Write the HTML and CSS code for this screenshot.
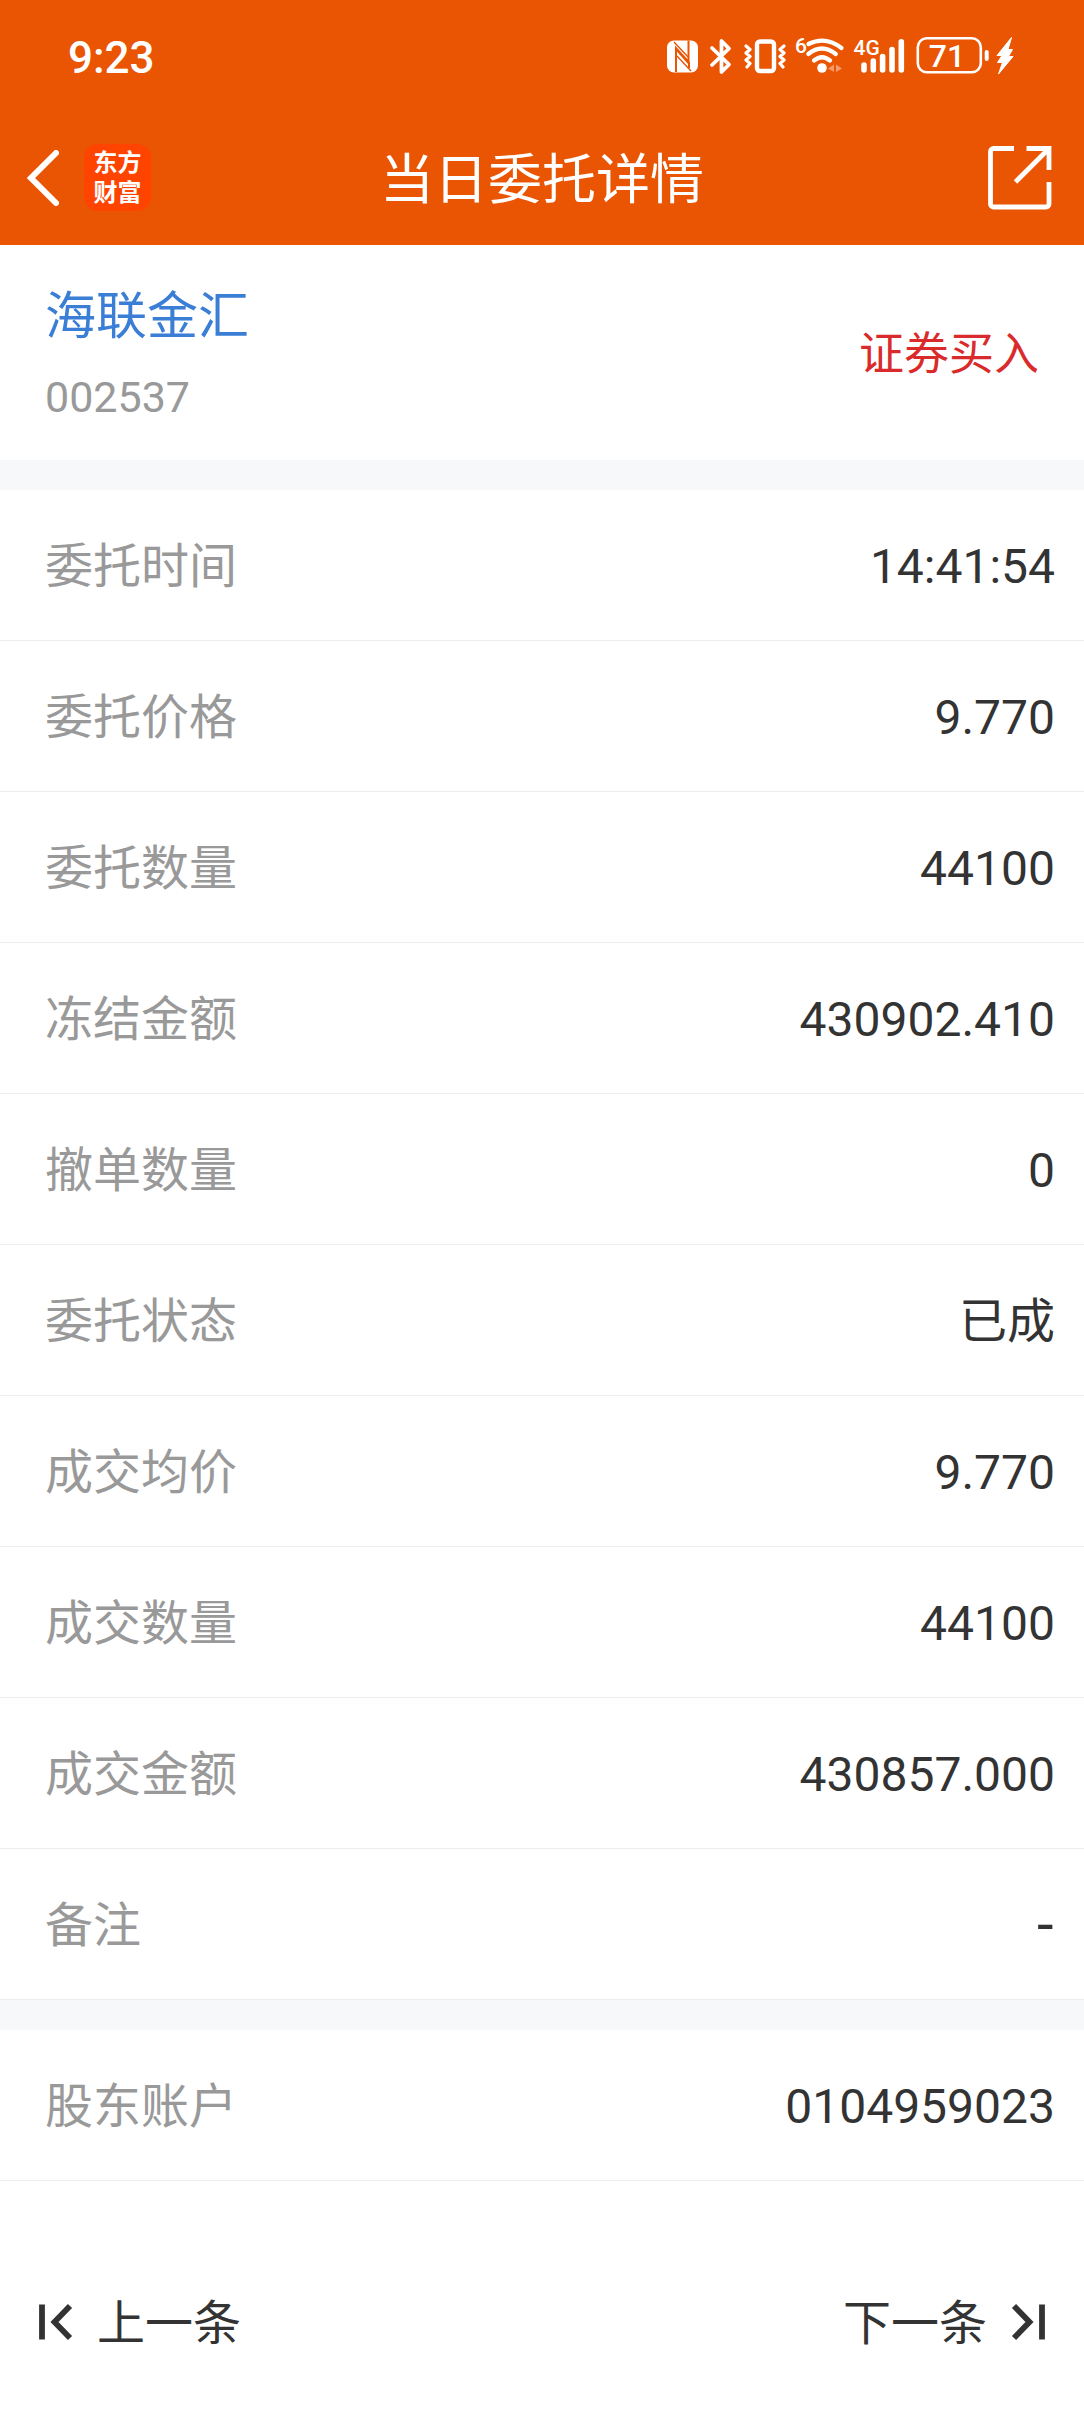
FILE: index.html
```html
<!DOCTYPE html>
<html lang="zh-CN">
<head>
    <meta charset="UTF-8">
    <meta name="viewport" content="width=device-width, initial-scale=1.0">
    <title>当日委托详情</title>
    <link rel="stylesheet" href="styles.css">
</head>
<body>
    <header class="header">
        <div class="status-bar">
            <span class="time">9:23</span>
            <svg class="status-icons" width="352" height="64" viewBox="664 24 352 64">
                <!-- NFC -->
                <rect x="667" y="40.5" width="31" height="32" rx="7" fill="#fff"/>
                <path d="M676 72V48L689 62.5V68M688.5 40.5V63L677 50" fill="none" stroke="#e95503" stroke-width="2"/>
                <path d="M674 42l14 15M677 56l14 15" fill="none" stroke="#e95503" stroke-width="1.4"/>
                <!-- bluetooth -->
                <path d="M712 48l17 16.5-7.500 7.500V41l7.500 7.500L712 65" fill="none" stroke="#fff" stroke-width="3.800" stroke-linejoin="round" stroke-linecap="round"/>
                <!-- vibrate -->
                <rect x="757" y="41.500" width="17" height="29.500" rx="3" fill="none" stroke="#fff" stroke-width="4.400"/>
                <path d="M746 46l4 3.500-4 3.500 4 3.500-4 3.500 4 3.500-3 3.500M784 46l-4 3.500 4 3.500-4 3.500 4 3.500-4 3.500 3 3.500" fill="none" stroke="#fff" stroke-width="3.200" stroke-linejoin="round" stroke-linecap="round"/>
                <!-- wifi -->
                <text x="795" y="53.300" class="tiny">6</text>
                <path d="M808.500 44q17-8.500 33 4M808.300 54q13.500-11 27.500 0M814 60.500q8-6.500 16 0" fill="none" stroke="#fff" stroke-width="4.200" stroke-linecap="round"/>
                <circle cx="822" cy="68" r="4.800" fill="#fff"/>
                <path d="M834 64.500v7.500l-6-3.500zM836 64.500v7.500l6-3.500z" fill="#f49a6b"/>
                <!-- signal -->
                <text x="853.500" y="55.300" class="tiny">4G</text>
                <path d="M864 65v5M873.300 61v9M882.600 56.500V70M892 49.500V70M901.300 41.800V70" stroke="#fff" stroke-width="5.600" stroke-linecap="round"/>
                <!-- battery -->
                <rect x="917.800" y="38.300" width="63" height="34" rx="9" fill="none" stroke="#fff" stroke-width="2.600"/>
                <text x="947" y="67.300" class="battery" text-anchor="middle">71</text>
                <rect x="984.700" y="50" width="4" height="11" rx="2" fill="#fff"/>
                <path d="M1011.500 37.500L997 55.500h5l-4.500 7h5l-4 11.500 14.500-17.500h-4.500l4-7h-4.500z" fill="#fff" stroke="#fff" stroke-width="1" stroke-linejoin="round"/>
            </svg>
        </div>
        <div class="nav-bar">
            <div class="nav-left">
                <svg class="back" width="32" height="56" viewBox="0 0 32 56">
                    <path d="M29 3L4 28l25 25" fill="none" stroke="#fff" stroke-width="6" stroke-linecap="round"/>
                </svg>
                <div class="logo">东方<br>财富</div>
            </div>
            <h1>当日委托详情</h1>
            <svg class="share" width="64" height="64" viewBox="0 0 64 64">
                <path d="M26 2.500H5.500a3 3 0 0 0-3 3V58a3 3 0 0 0 3 3H58a3 3 0 0 0 3-3V36M38.500 2.500H61V24M60 3.500L27.500 36" fill="none" stroke="#fff" stroke-width="4.800"/>
            </svg>
        </div>
    </header>

    <section class="stock">
        <div>
            <div class="stock-name">海联金汇</div>
            <div class="stock-code">002537</div>
        </div>
        <div class="direction">证券买入</div>
    </section>

    <section class="list">
        <div class="row"><span class="label">委托时间</span><span class="value">14:41:54</span></div>
        <div class="row"><span class="label">委托价格</span><span class="value">9.770</span></div>
        <div class="row"><span class="label">委托数量</span><span class="value">44100</span></div>
        <div class="row"><span class="label">冻结金额</span><span class="value">430902.410</span></div>
        <div class="row"><span class="label">撤单数量</span><span class="value">0</span></div>
        <div class="row"><span class="label">委托状态</span><span class="value">已成</span></div>
        <div class="row"><span class="label">成交均价</span><span class="value">9.770</span></div>
        <div class="row"><span class="label">成交数量</span><span class="value">44100</span></div>
        <div class="row"><span class="label">成交金额</span><span class="value">430857.000</span></div>
        <div class="row"><span class="label">备注</span><span class="value empty">-</span></div>
    </section>

    <section class="list">
        <div class="row"><span class="label">股东账户</span><span class="value">0104959023</span></div>
    </section>

    <footer class="pager">
        <div class="pager-item">
            <svg width="34" height="36" viewBox="0 0 34 36">
                <path d="M3 .5v35M31 2L15.500 18 31 34" fill="none" stroke="#333" stroke-width="5.800"/>
            </svg>
            <span>上一条</span>
        </div>
        <div class="pager-item">
            <span>下一条</span>
            <svg width="34" height="36" viewBox="0 0 34 36">
                <path d="M31 .5v35M3 2l15.500 16L3 34" fill="none" stroke="#333" stroke-width="5.800"/>
            </svg>
        </div>
    </footer>
</body>
</html>
```
FILE: styles.css
```css
* {
    box-sizing: border-box;
}
body {
    margin: 0;
    font-family: "Noto Sans CJK SC", sans-serif;
    font-size: 48px;
    line-height: 1;
    color: #333;
    background-color: #fff;
}
.header {
    height: 245px;
    background-color: #e95503;
    color: #fff;
}
.status-bar {
    display: flex;
    justify-content: space-between;
    align-items: center;
    height: 112px;
    padding: 0 68px;
}
.time {
    padding-top: 3px;
    font-family: Roboto, sans-serif;
    font-size: 44px;
    font-weight: 500;
}
.tiny {
    font-family: Roboto, sans-serif;
    font-size: 21px;
    font-weight: 500;
    fill: #fff;
}
.battery {
    font-family: Roboto, sans-serif;
    font-size: 32px;
    font-weight: 500;
    fill: #fff;
}
.nav-bar {
    display: grid;
    grid-template-columns: 1fr auto 1fr;
    align-items: center;
    height: 131px;
    padding: 0 32px 0 27px;
}
.nav-left {
    display: flex;
    align-items: center;
    gap: 25px;
}
.logo {
    width: 67px;
    height: 67px;
    padding-top: 2px;
    border-radius: 14px;
    background-color: #ff4400;
    font-size: 24px;
    font-weight: 700;
    line-height: 30px;
    text-align: center;
}
h1 {
    margin: 0;
    padding: 0 0 3px 5px;
    font-size: 54px;
    font-weight: 400;
}
.share {
    justify-self: end;
}
.stock {
    display: flex;
    justify-content: space-between;
    align-items: center;
    height: 215px;
    padding: 0 45px;
}
.stock-name {
    font-size: 51px;
    color: #3a7fd5;
}
.stock-code {
    margin-top: 38px;
    font-family: Roboto, sans-serif;
    font-size: 43px;
    color: #999;
}
.direction {
    padding-bottom: 4px;
    font-size: 45px;
    color: #d92b2b;
}
.list {
    border-top: 30px solid #f6f8fa;
}
.row {
    display: flex;
    justify-content: space-between;
    align-items: baseline;
    height: 151px;
    padding: 48px 29px 0 45px;
    border-bottom: 1px solid #ececec;
}
.label {
    color: #999;
}
.value {
    font-family: Roboto, "Noto Sans CJK SC", sans-serif;
}
.empty {
    font-family: "DejaVu Sans", sans-serif;
    font-size: 54px;
}
.pager {
    display: flex;
    justify-content: space-between;
    padding: 114px 39px 0;
}
.pager-item {
    display: flex;
    align-items: center;
    gap: 24px;
}
.pager-item span {
    margin-bottom: 6px;
}
```
